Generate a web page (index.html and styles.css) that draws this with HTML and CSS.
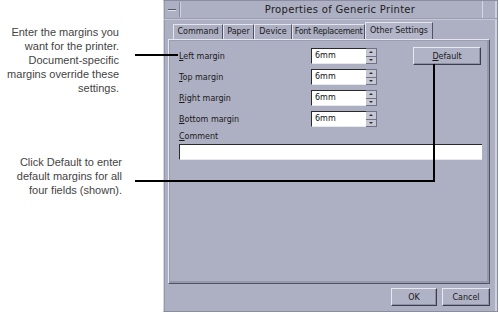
FILE: index.html
```html
<!DOCTYPE html>
<html lang="en">

<head>
    <meta charset="UTF-8">
    <title>Properties of Generic Printer</title>
    <link rel="stylesheet" href="styles.css">
</head>

<body>
    <div class="page">
        <div class="notes">
            <p class="note note-top">Enter the margins you<br>want for the printer.<br>Document-specific<br>margins override these<br>settings.</p>
            <p class="note note-bottom">Click Default to enter<br>default margins for all<br>four fields (shown).</p>
        </div>

        <div class="window">
            <div class="titlebar">
                <span class="close-box"><span class="dash"></span></span>
                <span class="title">Properties of Generic Printer</span>
                <span class="title-end"></span>
            </div>

            <div class="tabs">
                <span class="tab tab-command">Command</span>
                <span class="tab tab-paper">Paper</span>
                <span class="tab tab-device">Device</span>
                <span class="tab tab-font">Font Replacement</span>
                <span class="tab tab-other active">Other Settings</span>
            </div>

            <div class="panel">
                <div class="fields">
                    <label class="lbl"><u>L</u>eft margin</label>
                    <div class="spin"><span class="field">6mm</span><span class="arrows"><i class="up"></i><i class="down"></i></span></div>
                    <button class="btn btn-default"><u>D</u>efault</button>

                    <label class="lbl"><u>T</u>op margin</label>
                    <div class="spin"><span class="field">6mm</span><span class="arrows"><i class="up"></i><i class="down"></i></span></div>
                    <span></span>

                    <label class="lbl"><u>R</u>ight margin</label>
                    <div class="spin"><span class="field">6mm</span><span class="arrows"><i class="up"></i><i class="down"></i></span></div>
                    <span></span>

                    <label class="lbl"><u>B</u>ottom margin</label>
                    <div class="spin"><span class="field">6mm</span><span class="arrows"><i class="up"></i><i class="down"></i></span></div>
                    <span></span>
                </div>

                <label class="lbl comment-lbl"><u>C</u>omment</label>
                <div class="comment"></div>
            </div>

            <div class="actions">
                <button class="btn btn-ok">OK</button>
                <button class="btn btn-cancel">Cancel</button>
            </div>
        </div>

        <!-- callout lines -->
        <div class="callout line-a"></div>
        <div class="callout line-b"></div>
        <div class="callout line-c"></div>
    </div>
</body>

</html>
```

FILE: styles.css
```css
body {
    margin: 0;
    background: #ffffff;
}

.page {
    position: relative;
    display: flex;
    width: 500px;
    height: 314px;
    overflow: hidden;
}

/* annotations */
.notes {
    width: 163px;
    flex: none;
}

.note {
    margin: 0;
    width: 119px;
    text-align: right;
    font-family: "Liberation Sans", Arial, sans-serif;
    font-size: 11px;
    line-height: 14px;
    color: #444444;
}

.note-top {
    padding-top: 25px;
}

.note-bottom {
    padding-top: 60px;
    width: 122px;
}

.callout {
    position: absolute;
    background: #000000;
}

.line-a {
    left: 135px;
    top: 54px;
    width: 43px;
    height: 2px;
}

.line-b {
    left: 135px;
    top: 180px;
    width: 300px;
    height: 2px;
}

.line-c {
    left: 433px;
    top: 64px;
    width: 2px;
    height: 118px;
}

/* dialog window */
.window {
    width: 333px;
    height: 310px;
    flex: none;
    display: flex;
    flex-direction: column;
    background: #adb0c3;
    border: 1px solid #8a8da0;
    border-left-color: #d4d6e2;
    box-shadow: inset 1px 0 0 #9598ab, inset -2px 0 0 #cfd1dc;
    font-family: "DejaVu Sans", Verdana, sans-serif;
    font-size: 8px;
    color: #1a1a1a;
}

.titlebar {
    height: 17px;
    display: flex;
    align-items: center;
    border-bottom: 1px solid #9a9db0;
    box-shadow: 0 1px 0 #c6c8d5;
}

.close-box {
    width: 14px;
    height: 15px;
    flex: none;
    margin-left: 1px;
    display: flex;
    align-items: center;
    justify-content: center;
    border-right: 1px solid #85889b;
    box-shadow: 1px 0 0 #cfd1dc;
}

.dash {
    width: 8px;
    height: 1px;
    background: #555868;
    box-shadow: 0 1px 0 #dfe0e8;
}

.title {
    flex: 1;
    text-align: center;
    font-size: 10px;
    letter-spacing: 0.3px;
    color: #202020;
    padding-left: 18px;
}

.title-end {
    width: 14px;
    height: 17px;
    border-left: 1px solid #d6d8e2;
}

.tabs {
    display: flex;
    align-items: flex-end;
    height: 18px;
    margin-top: 2px;
    padding-left: 9px;
}

.tab {
    box-sizing: border-box;
    height: 15px;
    line-height: 14px;
    text-align: center;
    white-space: nowrap;
    border: 1px solid #e4e5ed;
    border-bottom: none;
    border-right-color: #505365;
    color: #1a1a1a;
}

.tab-command { width: 50px; }
.tab-paper { width: 31px; }
.tab-device { width: 38px; }
.tab-font { width: 73px; letter-spacing: -0.3px; }
.tab-other { width: 68px; }

.tab.active {
    height: 17px;
    line-height: 16px;
    background: #b3b6c8;
}

.panel {
    height: 235px;
    margin: 0 7px 0 4px;
    padding: 8px 6px 0 10px;
    border: 1px solid #e4e5ed;
    border-right-color: #505365;
    border-bottom-color: #505365;
    box-shadow: inset -2px -2px 0 #9598ab, inset 1px 1px 0 #9b9eb1;
}

.fields {
    display: grid;
    grid-template-columns: 132px 66px 36px 68px;
    grid-auto-rows: 16px;
    row-gap: 5px;
    align-items: center;
}

.fields > :nth-child(3n) {
    grid-column: 4;
}

.lbl {
    display: block;
    color: #1a1a1a;
}

.spin {
    display: flex;
    height: 16px;
}

.field {
    width: 52px;
    height: 14px;
    line-height: 14px;
    padding-left: 3px;
    background: #ffffff;
    border-top: 1px solid #2a2a2a;
    border-left: 1px solid #2a2a2a;
    border-bottom: 1px solid #e8e9ef;
    color: #111111;
}

.arrows {
    width: 10px;
    display: flex;
    flex-direction: column;
    border: 1px solid #6f7285;
    border-left: none;
    background: #c4c6d4;
}

.arrows i {
    flex: 1;
    display: flex;
    align-items: center;
    justify-content: center;
}

.arrows i::before {
    content: "";
    border-left: 2px solid transparent;
    border-right: 2px solid transparent;
}

.arrows .up {
    border-bottom: 1px solid #6f7285;
}

.arrows .up::before {
    border-bottom: 2px solid #303030;
}

.arrows .down::before {
    border-top: 2px solid #303030;
}

.btn {
    font-family: "DejaVu Sans", Verdana, sans-serif;
    font-size: 8px;
    color: #1a1a1a;
    height: 18px;
    padding: 0;
    background: #b0b3c5;
    border: 1px solid #e8e9ef;
    border-right-color: #3a3d4d;
    border-bottom-color: #3a3d4d;
    box-shadow: inset -1px -1px 0 #8e91a4;
}

.btn-default {
    width: 68px;
    margin-top: -1px;
    align-self: start;
    height: 18px;
}

.comment-lbl {
    margin-top: 3px;
    height: 13px;
    line-height: 13px;
}

.comment {
    width: 302px;
    height: 14px;
    margin-top: 1px;
    background: #ffffff;
    border-top: 1px solid #2a2a2a;
    border-left: 1px solid #2a2a2a;
    border-bottom: 1px solid #e8e9ef;
}

.actions {
    display: flex;
    justify-content: flex-end;
    gap: 5px;
    margin: 4px 7px 0 0;
}

.btn-ok {
    width: 46px;
}

.btn-cancel {
    width: 48px;
}
```
